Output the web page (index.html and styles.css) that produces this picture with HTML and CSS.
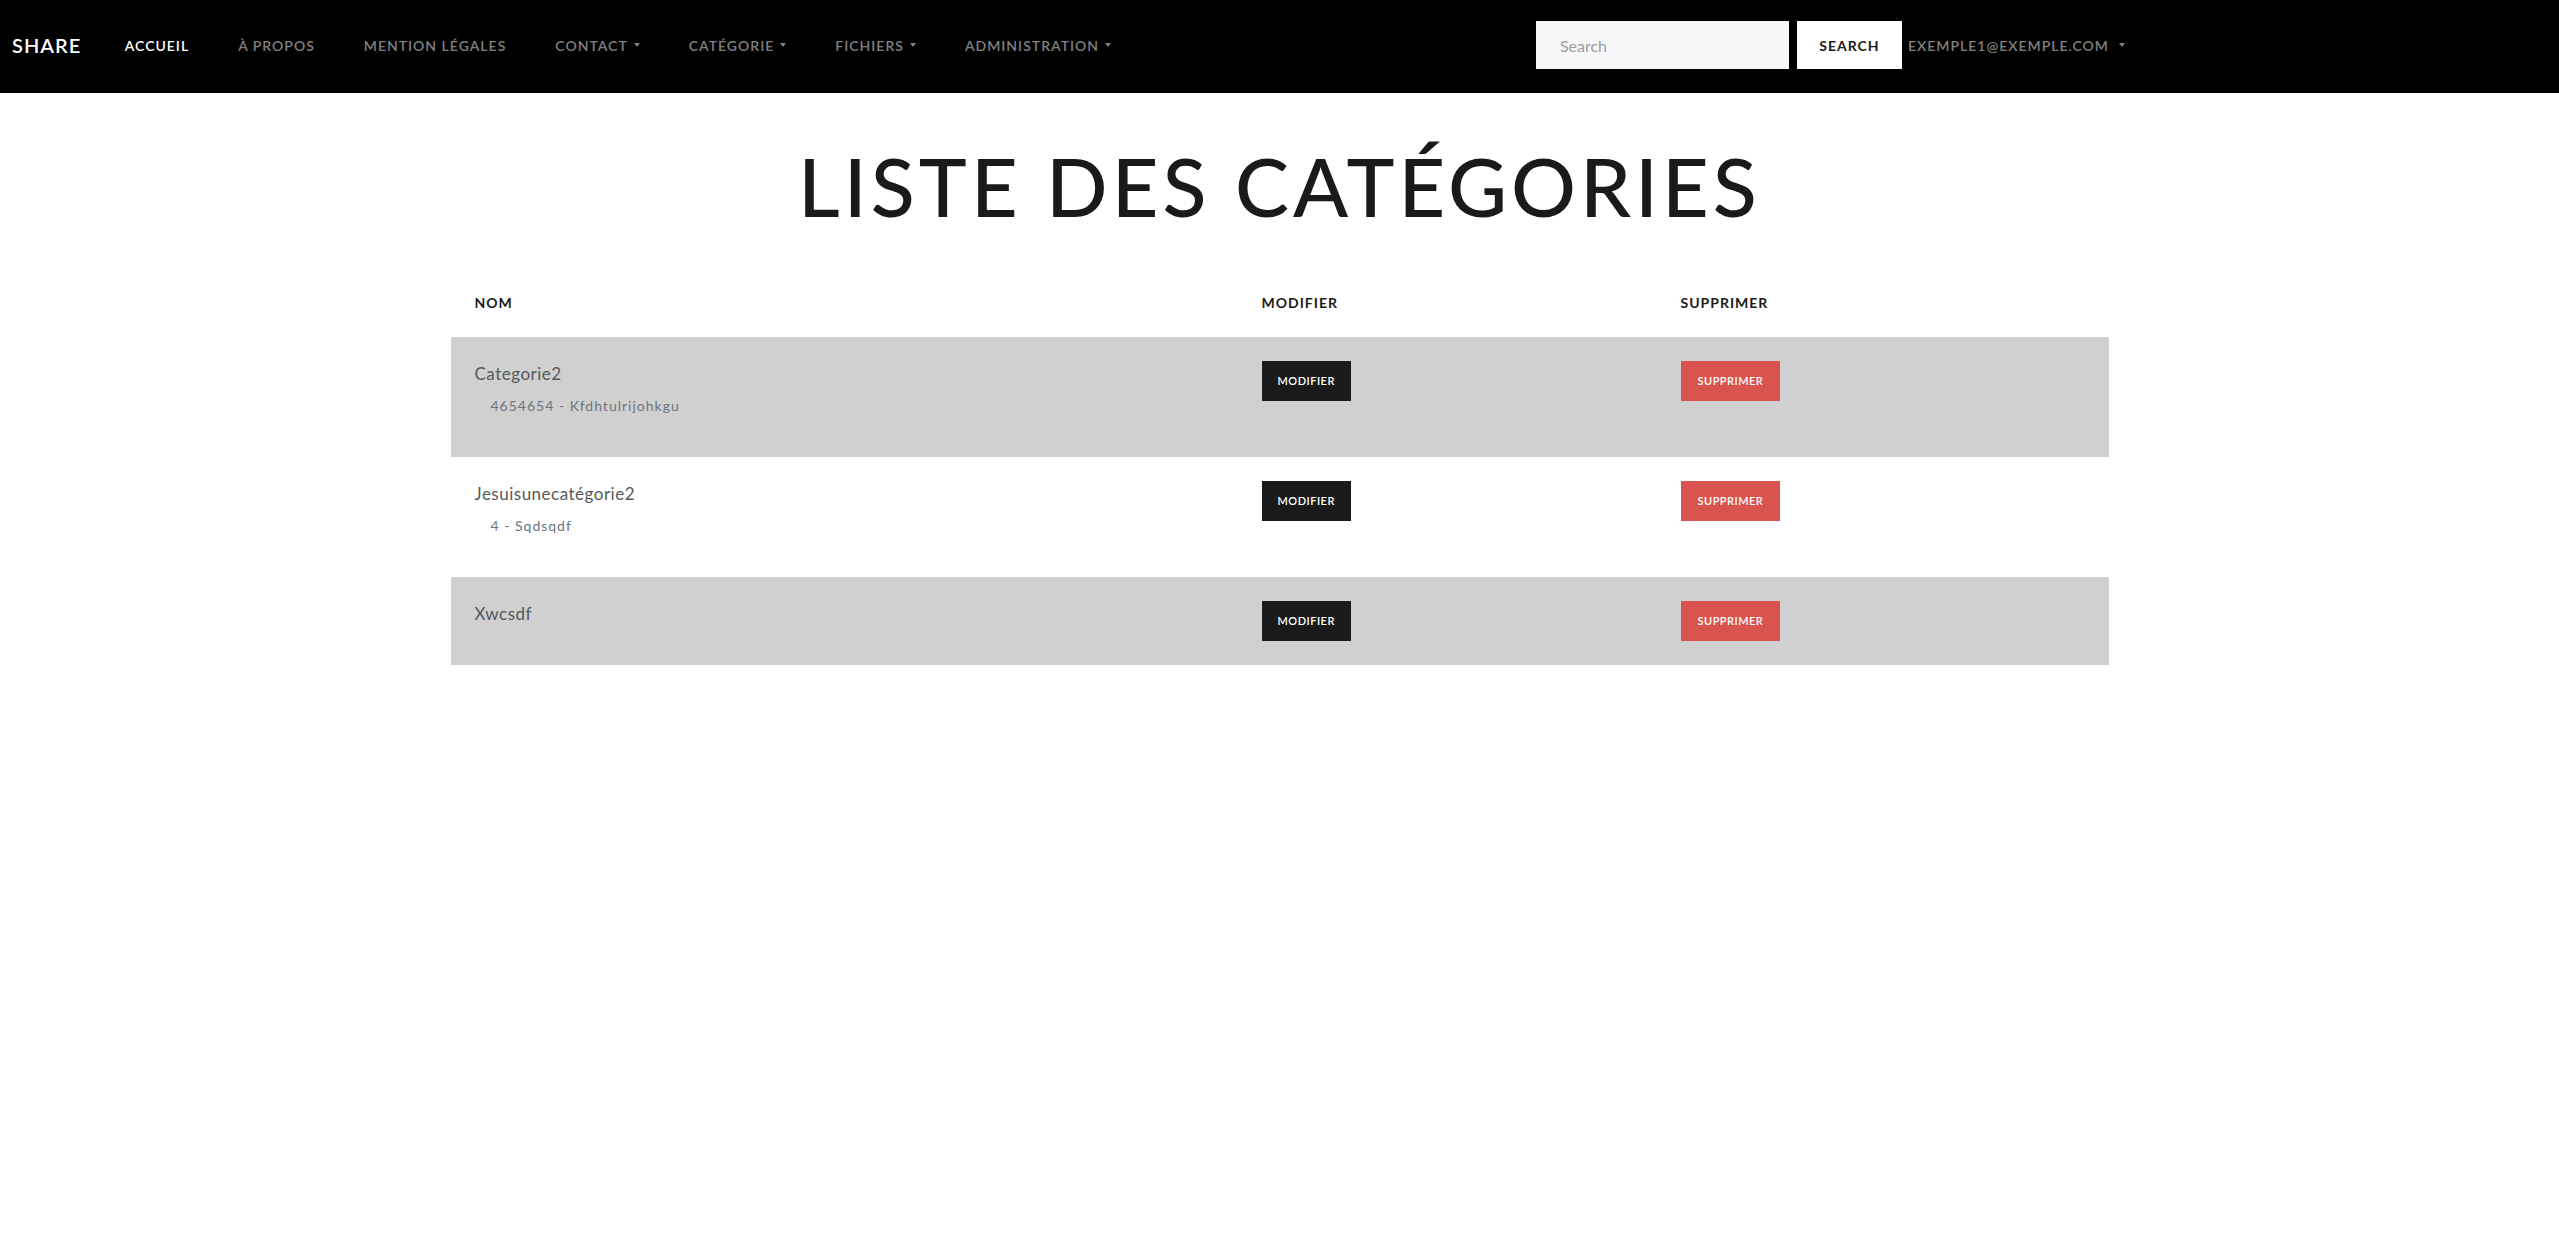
FILE: index.html
```html
<!DOCTYPE html>
<html lang="fr">
<head>
<meta charset="utf-8">
<title>Liste des catégories</title>
<link rel="stylesheet" href="styles.css">
</head>
<body>
<nav class="navbar">
  <a class="brand" href="#">SHARE</a>
  <ul class="nav-links">
    <li><a class="nav-link active" href="#">Accueil</a></li>
    <li><a class="nav-link" href="#">À propos</a></li>
    <li><a class="nav-link" href="#">Mention légales</a></li>
    <li><a class="nav-link dropdown" href="#">Contact<span class="caret"></span></a></li>
    <li><a class="nav-link dropdown" href="#">Catégorie<span class="caret"></span></a></li>
    <li><a class="nav-link dropdown" href="#">Fichiers<span class="caret"></span></a></li>
    <li><a class="nav-link dropdown" href="#">Administration<span class="caret"></span></a></li>
  </ul>
  <form class="search-form">
    <input class="search-input" type="text" placeholder="Search">
    <button class="search-btn" type="button">Search</button>
  </form>
  <a class="user-link" href="#">exemple1@exemple.com<span class="caret wide"></span></a>
</nav>

<main class="page">
  <h1 class="title">Liste des catégories</h1>
  <table class="cat-table">
    <thead>
      <tr>
        <th class="col-name">Nom</th>
        <th class="col-edit">Modifier</th>
        <th class="col-del">Supprimer</th>
      </tr>
    </thead>
    <tbody>
      <tr class="shaded">
        <td>
          <div class="cat-name">Categorie2</div>
          <ul class="sub-list"><li>4654654 - Kfdhtulrijohkgu</li></ul>
        </td>
        <td><a class="btn btn-dark" href="#">Modifier</a></td>
        <td><a class="btn btn-red" href="#">Supprimer</a></td>
      </tr>
      <tr>
        <td>
          <div class="cat-name">Jesuisunecatégorie2</div>
          <ul class="sub-list"><li>4 - Sqdsqdf</li></ul>
        </td>
        <td><a class="btn btn-dark" href="#">Modifier</a></td>
        <td><a class="btn btn-red" href="#">Supprimer</a></td>
      </tr>
      <tr class="shaded">
        <td>
          <div class="cat-name">Xwcsdf</div>
        </td>
        <td><a class="btn btn-dark" href="#">Modifier</a></td>
        <td><a class="btn btn-red" href="#">Supprimer</a></td>
      </tr>
    </tbody>
  </table>
</main>
</body>
</html>
```

FILE: styles.css
```css
* { box-sizing: border-box; }

body {
  margin: 0;
  font-family: Lato, "Noto Sans", sans-serif;
  color: #55595c;
  background: #fff;
}

a { text-decoration: none; }

.navbar {
  height: 93px;
  background: #000;
  display: flex;
  align-items: center;
  padding: 0 434px 3px 12px;
}

.brand {
  color: #fff;
  font-size: 20px;
  font-weight: 600;
  letter-spacing: 1px;
  margin-right: 19px;
}

.nav-links {
  list-style: none;
  margin: 0;
  padding: 0;
  display: flex;
  flex: 1;
}

.nav-link {
  display: flex;
  align-items: center;
  padding: 0 24.5px;
  font-size: 14px;
  line-height: 21px;
  font-weight: 600;
  letter-spacing: 1px;
  text-transform: uppercase;
  color: #808080;
}

.nav-link.active { color: #fff; }

.caret {
  display: inline-block;
  width: 0;
  height: 0;
  margin-left: 6px;
  border-top: 4px solid currentColor;
  border-left: 3.5px solid transparent;
  border-right: 3.5px solid transparent;
}

.caret.wide { margin-left: 10px; }

.search-form {
  display: flex;
  gap: 8px;
}

.search-input {
  width: 253px;
  height: 48px;
  border: 0;
  background: #f7f7f9;
  padding: 0 24px;
  font-family: inherit;
  font-size: 16px;
  color: #55595c;
  outline: none;
}

.search-input::placeholder { color: #9a9ea2; }

.search-btn {
  width: 105px;
  height: 48px;
  border: 0;
  background: #fff;
  color: #1a1a1a;
  font-family: inherit;
  font-size: 14px;
  font-weight: 700;
  letter-spacing: 1px;
  text-transform: uppercase;
  padding: 0;
}

.user-link {
  display: flex;
  align-items: center;
  margin-left: 6px;
  font-size: 14px;
  font-weight: 600;
  letter-spacing: 1px;
  text-transform: uppercase;
  color: #808080;
}

.page {
  padding-top: 44px;
}

.title {
  margin: 0 0 34px;
  text-align: center;
  font-size: 81px;
  line-height: 1.2;
  font-weight: 500;
  letter-spacing: 4px;
  text-transform: uppercase;
  color: #1a1a1a;
}

.cat-table {
  width: 1658px;
  margin: 0 auto;
  border-collapse: collapse;
}

.cat-table th {
  text-align: left;
  padding: 24px;
  font-size: 14px;
  line-height: 21px;
  font-weight: 700;
  letter-spacing: 1px;
  text-transform: uppercase;
  color: #1a1a1a;
}

.col-name { width: 787px; }
.col-edit { width: 419px; }

.cat-table td {
  padding: 24px;
  vertical-align: top;
}

.cat-table tr.shaded td { background: #d0d0d0; }

.cat-name {
  font-size: 17px;
  line-height: 26px;
  letter-spacing: 0.5px;
  color: #55595c;
}

.sub-list {
  list-style: none;
  margin: 8px 0 17px;
  padding-left: 16px;
  font-size: 14px;
  line-height: 21px;
  letter-spacing: 1px;
  color: #6c757d;
}

.btn {
  display: inline-block;
  height: 40px;
  line-height: 40px;
  padding: 0 16px;
  font-size: 11px;
  font-weight: 600;
  letter-spacing: 0.5px;
  text-transform: uppercase;
  color: #fff;
}

.btn-red { padding: 0 17px; }

.btn-dark { background: #1a1a1a; }
.btn-red { background: #d9534f; }
```
